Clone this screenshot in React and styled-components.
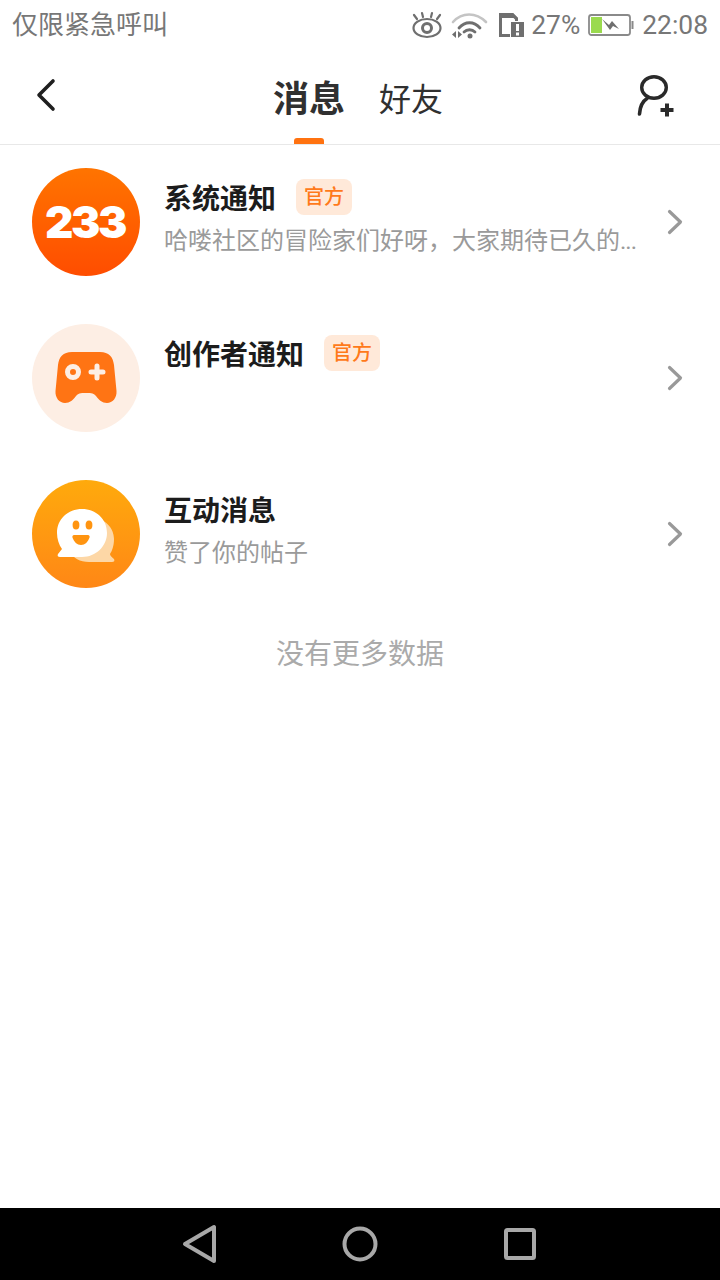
import React from "react";
import styled, { createGlobalStyle } from "styled-components";

const CJK = `"Roboto", "Noto Sans CJK SC", sans-serif`;

const GlobalStyle = createGlobalStyle`
  html, body {
    margin: 0;
    padding: 0;
    background: #fff;
  }
  body {
    font-family: ${CJK};
  }
`;

const Page = styled.div`
  width: 720px;
  height: 1280px;
  display: flex;
  flex-direction: column;
  overflow: hidden;
  background: #fff;
`;

const StatusBar = styled.div`
  height: 50px;
  display: flex;
  align-items: center;
  justify-content: space-between;
  padding: 0 12px;
  color: #777;
  font-size: 26px;
  line-height: 50px;
`;

const StatusIcons = styled.div`
  display: flex;
  align-items: center;
  font-size: 26.4px;
`;

const StatusSlot = styled.span`
  display: flex;
  margin-left: ${(p) => p.$gap}px;
`;

const Header = styled.header`
  height: 94px;
  box-shadow: 0 1px 0 #e8e8e8;
  display: flex;
  align-items: flex-start;
  justify-content: space-between;
  padding: 0 44px 0 36px;
`;

const IconButton = styled.div`
  display: flex;
  margin-top: ${(p) => p.$top}px;
`;

const Tabs = styled.div`
  display: flex;
  align-items: center;
  gap: 34px;
  height: 94px;
  margin-left: 24px;
`;

const Tab = styled.div`
  position: relative;
  height: 94px;
  line-height: 100px;
  color: #303030;
  font-size: ${(p) => (p.$active ? 36 : 32)}px;
  font-weight: ${(p) => (p.$active ? 700 : 400)};

  ${(p) =>
    p.$active &&
    `
    &::after {
      content: "";
      position: absolute;
      left: 21px;
      bottom: 0;
      width: 30px;
      height: 6px;
      border-radius: 3px 3px 0 0;
      background: #ff7210;
    }
  `}
`;

const List = styled.div`
  display: flex;
  flex-direction: column;
`;

const Row = styled.div`
  height: 156px;
  box-sizing: border-box;
  display: flex;
  align-items: center;
  padding: 0 37px 0 32px;
`;

const Avatar = styled.div`
  width: 108px;
  height: 108px;
  flex: none;
  border-radius: 50%;
  display: flex;
  align-items: center;
  justify-content: center;
  background: ${(p) => p.$bg};
`;

const LogoText = styled.span`
  color: #fff;
  font-family: "Inter", sans-serif;
  font-size: 44px;
  font-weight: 900;
  line-height: 44px;
  letter-spacing: -2.500px;
  margin-left: -2px;
`;

const RowBody = styled.div`
  flex: 1;
  min-width: 0;
  display: flex;
  flex-direction: column;
  gap: 8px;
  margin-left: 24px;
  align-self: flex-start;
  padding-top: 35px;
`;

const TitleLine = styled.div`
  display: flex;
  align-items: center;
  gap: 20px;
  height: 36px;
`;

const Title = styled.div`
  color: #1c1c1c;
  font-size: 28px;
  font-weight: 700;
  line-height: 36px;
  padding-top: 5px;
`;

const Badge = styled.span`
  width: 56px;
  height: 36px;
  border-radius: 8px;
  display: flex;
  align-items: center;
  justify-content: center;
  background: #ffe9d9;
  color: #ff7a1a;
  font-size: 20px;
  font-weight: 500;
  line-height: 35px;
`;

const Preview = styled.div`
  color: #9a9a9a;
  font-size: 24px;
  line-height: 36px;
  white-space: nowrap;
`;

const Dots = styled.span`
  letter-spacing: -1px;
`;

const Chevron = styled.svg`
  flex: none;
`;

const EndNote = styled.div`
  margin-top: 25px;
  text-align: center;
  color: #aaa;
  font-size: 28px;
  line-height: 36px;
`;

const Spacer = styled.div`
  flex: 1;
`;

const NavBar = styled.nav`
  height: 72px;
  background: #000;
  display: flex;
  align-items: center;
  justify-content: center;
  gap: 124px;
`;

const GameIcon = () => (
  <svg width="108" height="108" viewBox="0 0 108 108">
    <path
      fill="#ff7414"
      d="M40 28h28c9 0 13 5 14 13l2.500 26c.500 7-4 12-9.500 12-5 0-8-3-11-7-2-2.500-4-3-10-3s-8 .500-10 3c-3 4-6 7-11 7-5.500 0-10-5-9.500-12l2.500-26c1-8 5-13 14-13z"
    />
    <circle cx="41" cy="48" r="5.500" fill="none" stroke="#fdeee4" strokeWidth="5" />
    <path d="M65 42v12M59 48h12" stroke="#fdeee4" strokeWidth="5" strokeLinecap="round" />
  </svg>
);

const ChatIcon = () => (
  <svg width="108" height="108" viewBox="0 0 108 108">
    <path
      fill="#fdd7a6"
      d="M60 38c13 0 22 10 22 21 0 7-2 12-4 15 0 2 2 3 4 5 1 2 0 3-2 3H57c-9 0-16-4-19-10z"
    />
    <path
      fill="#fff"
      d="M50 29c14 0 25 10 25 24 0 13-11 24-25 24H28c-2 0-3-1-2-3l4-5c-3-4-5-10-5-16 0-14 11-24 25-24z"
    />
    <ellipse cx="44" cy="45" rx="3.400" ry="4.600" fill="#ff9410" />
    <ellipse cx="57" cy="45" rx="3.400" ry="4.600" fill="#ff9410" />
    <path d="M42 55h14c1 0 2 1 1.500 2.500C56 62 53 65 49 65s-7-3-8.500-7.500C40 56 41 55 42 55z" fill="#ff9410" />
  </svg>
);

const RowArrow = () => (
  <Chevron width="16" height="26" viewBox="0 0 16 26" fill="none">
    <path d="M2.500 2.500 13.500 13 2.500 23.500" stroke="#999" strokeWidth="3.200" strokeLinecap="round" strokeLinejoin="round" />
  </Chevron>
);

const messages = [
  {
    title: "系统通知",
    official: true,
    preview: (
      <>
        哈喽社区的冒险家们好呀，大家期待已久的<Dots>...</Dots>
      </>
    ),
    bg: "linear-gradient(180deg, #ff7400, #ff4d00)",
    icon: <LogoText>233</LogoText>,
  },
  {
    title: "创作者通知",
    official: true,
    bg: "#fdeee4",
    icon: <GameIcon />,
  },
  {
    title: "互动消息",
    preview: "赞了你的帖子",
    bg: "linear-gradient(180deg, #ffaa0c, #ff8716)",
    icon: <ChatIcon />,
  },
];

const App = () => {
  return (
    <Page>
      <GlobalStyle />
      <StatusBar>
        <span>仅限紧急呼叫</span>
        <StatusIcons>
          {/* eye comfort */}
          <StatusSlot $gap={0}>
            <svg width="32" height="28" viewBox="0 0 32 28" fill="none" stroke="#6f6f6f" strokeWidth="2.200" strokeLinecap="round">
              <ellipse cx="16" cy="17" rx="13.500" ry="9" />
              <circle cx="16" cy="17" r="4.500" strokeWidth="3" />
              <path d="M3 4l3 4M11 2l1 4M21 2l-1 4M29 4l-3 4" />
            </svg>
          </StatusSlot>
          {/* wifi */}
          <StatusSlot $gap={7}>
            <svg width="38" height="28" viewBox="0 0 38 28" fill="none" strokeLinecap="round">
              <path d="M3 11C12 1 26 1 36 11" stroke="#c4c4c4" strokeWidth="2.600" />
              <path d="M9 17c6-7 15-7 21 0" stroke="#6f6f6f" strokeWidth="2.800" />
              <path d="M14 21c3-3 8-3 11 0" stroke="#6f6f6f" strokeWidth="2.800" />
              <circle cx="20" cy="25" r="2.500" fill="#6f6f6f" />
              <path d="M6 20v7l-4-3.500zM8 20v7l4-3.500z" fill="#6f6f6f" />
            </svg>
          </StatusSlot>
          {/* sim card */}
          <StatusSlot $gap={10}>
            <svg width="26" height="26" viewBox="0 0 26 26">
              <path d="M1 1h14l5 5v3h-3V7.500L13.500 4H4v18h8v3H1z" fill="#6f6f6f" />
              <path d="M1 1h14l5 5H1z" fill="#6f6f6f" />
              <rect x="13" y="10" width="13" height="15" fill="#6f6f6f" />
              <rect x="18" y="12" width="3" height="7" fill="#fff" />
              <rect x="18" y="20.500" width="3" height="3" fill="#fff" />
            </svg>
          </StatusSlot>
          <StatusSlot $gap={7}>27%</StatusSlot>
          {/* battery, charging */}
          <StatusSlot $gap={8}>
            <svg width="46" height="24" viewBox="0 0 46 24">
              <rect x="1" y="2" width="41" height="20" rx="2.500" fill="none" stroke="#8a8a8a" strokeWidth="1.800" />
              <rect x="3" y="4" width="11" height="16" fill="#9ada4e" />
              <rect x="43.500" y="8" width="2" height="8" fill="#8a8a8a" />
              <path d="M14 6l7 6 3-4 7 8-6-3-3 4z" fill="#6f6f6f" />
            </svg>
          </StatusSlot>
          <StatusSlot $gap={8}>22:08</StatusSlot>
        </StatusIcons>
      </StatusBar>

      <Header>
        <IconButton $top={28}>
          <svg width="20" height="34" viewBox="0 0 20 34" fill="none">
            <path d="M17 3 3 17l14 14" stroke="#1f1f1f" strokeWidth="3.600" strokeLinecap="round" strokeLinejoin="round" />
          </svg>
        </IconButton>
        <Tabs>
          <Tab $active>消息</Tab>
          <Tab>好友</Tab>
        </Tabs>
        <IconButton $top={24}>
          <svg width="40" height="44" viewBox="0 0 40 44" fill="none" strokeLinecap="round">
            <ellipse cx="18" cy="13.500" rx="12.300" ry="10.800" stroke="#2a2a2a" strokeWidth="3.400" />
            <path d="M11 24.500C7 27 4 32 3.500 40" stroke="#2a2a2a" strokeWidth="3.600" />
            <path d="M31 29.500v13M24.500 36h13" stroke="#2a2a2a" strokeWidth="4" strokeLinecap="butt" />
          </svg>
        </IconButton>
      </Header>

      <List>
        {messages.map((m) => (
          <Row key={m.title}>
            <Avatar $bg={m.bg}>{m.icon}</Avatar>
            <RowBody>
              <TitleLine>
                <Title>{m.title}</Title>
                {m.official && <Badge>官方</Badge>}
              </TitleLine>
              {m.preview && <Preview>{m.preview}</Preview>}
            </RowBody>
            <RowArrow />
          </Row>
        ))}
      </List>

      <EndNote>没有更多数据</EndNote>
      <Spacer />

      <NavBar>
        <svg width="36" height="40" viewBox="0 0 36 40" fill="none" stroke="#a8a8a8" strokeWidth="4" strokeLinejoin="round">
          <path d="M32 3v34L3 20z" />
        </svg>
        <svg width="36" height="36" viewBox="0 0 36 36" fill="none" stroke="#a8a8a8" strokeWidth="4">
          <circle cx="18" cy="18" r="15.500" />
        </svg>
        <svg width="36" height="34" viewBox="0 0 36 34" fill="none" stroke="#a8a8a8" strokeWidth="4" strokeLinejoin="round">
          <rect x="4" y="3" width="28" height="28" rx="1.500" />
        </svg>
      </NavBar>
    </Page>
  );
};

export default App;
